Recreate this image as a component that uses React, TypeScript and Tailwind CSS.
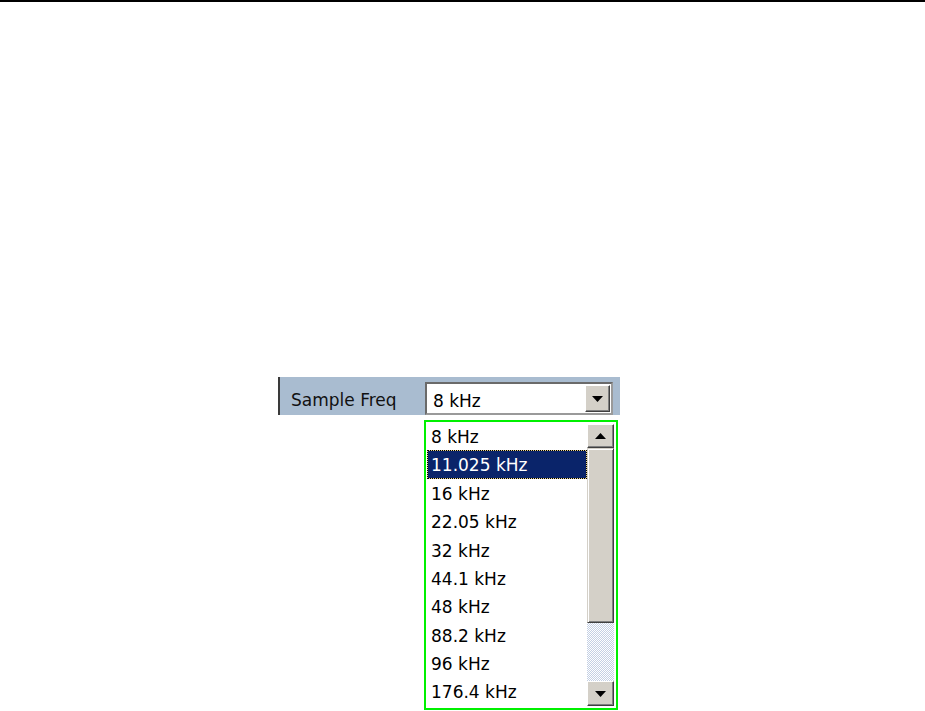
const items = [
  "8 kHz",
  "11.025 kHz",
  "16 kHz",
  "22.05 kHz",
  "32 kHz",
  "44.1 kHz",
  "48 kHz",
  "88.2 kHz",
  "96 kHz",
  "176.4 kHz",
];

function Arrow({ up }: { up?: boolean }) {
  return (
    <svg width="11" height="6" viewBox="0 0 11 6" className="block">
      {up ? <path d="M5.5 0 L11 6 L0 6 Z" fill="#000" /> : <path d="M0 0 L11 0 L5.5 6 Z" fill="#000" />}
    </svg>
  );
}

function RaisedButton({ up, className }: { up?: boolean; className: string }) {
  return (
    <div
      className={`${className} flex items-center justify-center bg-[#d4d0c8] border border-t-white border-l-white border-r-[#404040] border-b-[#404040] shadow-[inset_-1px_-1px_0_#808080]`}
    >
      <Arrow up={up} />
    </div>
  );
}

export default function App() {
  return (
    <div
      className="w-[925px] h-[711px] bg-white border-t-2 border-black overflow-hidden"
      style={{ fontFamily: '"DejaVu Sans", Verdana, sans-serif' }}
    >
      <div className="pt-[375px] pl-[278px]">
        {/* header row */}
        <div className="flex items-end w-[342px] h-[38px] border-l-2 border-[#3a3a3a] bg-[#a9bcd0]">
          <div className="w-[145px] h-full flex items-center pl-[11px] pt-[10px] text-[17px] text-[#111]">
            Sample Freq
          </div>
          <div className="w-[188px] h-[33px] flex items-center justify-between bg-white border-2 border-t-[#6a6a6a] border-l-[#6a6a6a] border-r-[#9a9a9a] border-b-[#9a9a9a] pl-[6px] pr-px">
            <span className="text-[17px] text-black leading-none pt-[5px]">8 kHz</span>
            <RaisedButton className="w-[25px] h-[27px]" />
          </div>
        </div>

        {/* dropdown list */}
        <div className="ml-[146px] mt-[5px] w-[194px] h-[290px] border-2 border-[#00f000] bg-white flex">
          <div className="w-[161px] pl-px">
            {items.map((it, i) =>
              i === 1 ? (
                <div key={it} className="h-[28.4px] bg-[#e8d28c] border border-dotted border-black">
                  <div className="h-full bg-[#0a246a] text-white text-[17px] flex items-center pl-[3px] pt-[3px]">
                    {it}
                  </div>
                </div>
              ) : (
                <div key={it} className="h-[28.4px] text-[17px] text-black flex items-center pl-[4px] pt-[3px]">
                  {it}
                </div>
              )
            )}
          </div>
          <div className="w-[27px] flex flex-col pt-[2px]">
            <RaisedButton up className="w-[27px] h-[24px]" />
            <div className="w-[27px] h-[175px] bg-[#d4d0c8] border border-t-[#d4d0c8] border-l-[#d4d0c8] border-r-[#404040] border-b-[#404040] shadow-[inset_1px_1px_0_#fff,inset_-1px_-1px_0_#808080]" />
            <div className="w-[27px] h-[58px] bg-[repeating-conic-gradient(#c4d0e4_0%_25%,#ffffff_0%_50%)] bg-[length:2px_2px]" />
            <RaisedButton className="w-[27px] h-[25px]" />
          </div>
        </div>
      </div>
    </div>
  );
}
